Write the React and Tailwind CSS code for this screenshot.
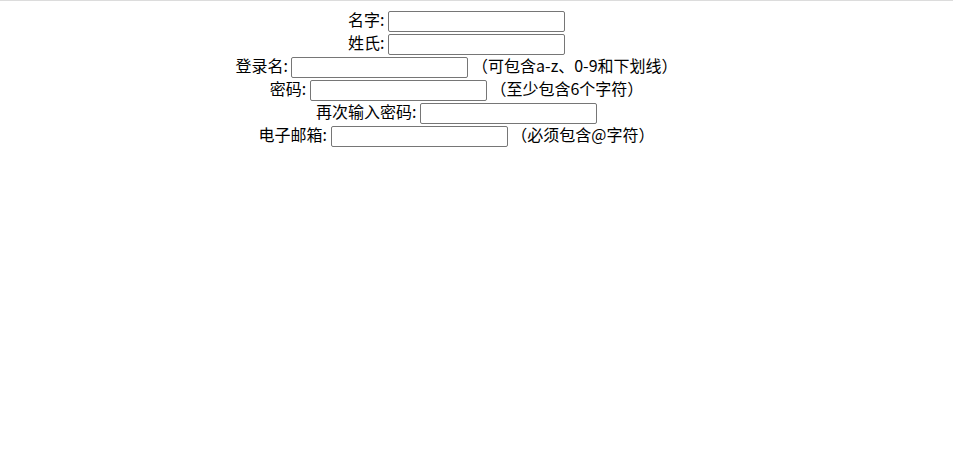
import React from "react";

const font = { fontFamily: '"Noto Sans CJK SC", "Noto Sans", sans-serif' };

function Field() {
  return (
    <input
      type="text"
      className="inline-block align-middle w-[177px] h-[21px] border border-[#767676] rounded-[2px] bg-white px-[2px] py-[1px] text-[13px] outline-none"
    />
  );
}

function Row({ label, hint }) {
  return (
    <div className="h-[23px] leading-[23px] whitespace-nowrap">
      {label}: <Field />
      {hint ? <> {hint}</> : null}
    </div>
  );
}

export default function App() {
  return (
    <div className="min-h-[466px] w-full bg-white border-t border-[#dcdcdc]">
      <div
        className="w-[913px] pt-[7px] text-center text-[16px] text-black"
        style={font}
      >
        <Row label="名字" />
        <Row label="姓氏" />
        <Row label="登录名" hint="（可包含a-z、0-9和下划线）" />
        <Row label="密码" hint="（至少包含6个字符）" />
        <Row label="再次输入密码" />
        <Row label="电子邮箱" hint="（必须包含@字符）" />
      </div>
    </div>
  );
}
